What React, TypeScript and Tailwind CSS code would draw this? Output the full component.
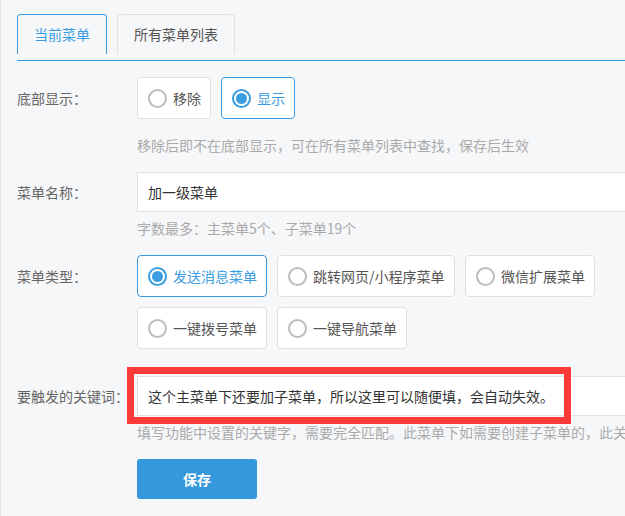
import React from "react";

type Opt = { label: string; checked?: boolean; w: string };

const Radio = ({ checked }: { checked?: boolean }) =>
  checked ? (
    <span className="w-[19px] h-[19px] rounded-full border-2 border-[#3a9de0] flex items-center justify-center shrink-0">
      <span className="w-[11px] h-[11px] rounded-full bg-[#3a9de0]"></span>
    </span>
  ) : (
    <span className="w-[19px] h-[19px] rounded-full border-2 border-[#bdbdbd] bg-white shrink-0"></span>
  );

const RadioBox = ({ label, checked, w }: Opt) => (
  <div
    className={`${w} h-[42px] flex items-center gap-[6px] pl-[10px] rounded-[4px] border bg-white text-[14px] ${
      checked ? "border-[#3a9de0] text-[#3a9de0]" : "border-[#e1e1e1] text-[#555]"
    }`}
  >
    <Radio checked={checked} />
    <span className="leading-none">{label}</span>
  </div>
);

const Label = ({ children }: { children: React.ReactNode }) => (
  <div className="w-[120px] shrink-0 text-[14px] text-[#666] leading-none">{children}</div>
);

const Hint = ({ children }: { children: React.ReactNode }) => (
  <div className="ml-[120px] h-[20px] leading-[20px] text-[14px] text-[#aaa] whitespace-nowrap">{children}</div>
);

export default function App() {
  return (
    <div
      className="w-[625px] h-[516px] overflow-hidden bg-[#f6f7f9] border-l border-[#e3e3e3]"
      style={{ fontFamily: '"Noto Sans CJK SC", "Noto Sans", sans-serif' }}
    >
      <div className="pl-[16px] pt-[14px]">
        {/* Tabs */}
        <div className="flex gap-[10px] h-[40px]">
          <div className="w-[90px] flex items-center justify-center border border-b-0 border-[#3a9de0] rounded-t-[4px] text-[14px] text-[#3a9de0]">
            当前菜单
          </div>
          <div className="w-[118px] flex items-center justify-center border border-b-0 border-[#e1e1e1] rounded-t-[4px] text-[14px] text-[#555]">
            所有菜单列表
          </div>
        </div>
        <div className="mt-[6px] h-px bg-[#3a9de0]"></div>

        {/* 底部显示 */}
        <div className="mt-[16px] flex items-center">
          <Label>底部显示：</Label>
          <div className="flex gap-[10px]">
            <RadioBox label="移除" w="w-[74px]" />
            <RadioBox label="显示" checked w="w-[74px]" />
          </div>
        </div>
        <div className="mt-[16px]">
          <Hint>移除后即不在底部显示，可在所有菜单列表中查找，保存后生效</Hint>
        </div>

        {/* 菜单名称 */}
        <div className="mt-[17px] flex items-center">
          <Label>菜单名称：</Label>
          <div className="w-[560px] h-[40px] shrink-0 bg-white border border-[#e1e1e1] flex items-center pl-[10px] text-[14px] text-[#333]">
            加一级菜单
          </div>
        </div>
        <div className="mt-[6px]">
          <Hint>字数最多：主菜单5个、子菜单19个</Hint>
        </div>

        {/* 菜单类型 */}
        <div className="mt-[17px] flex">
          <div className="pt-[14px]">
            <Label>菜单类型：</Label>
          </div>
          <div className="flex flex-col gap-[10px]">
            <div className="flex gap-[10px]">
              <RadioBox label="发送消息菜单" checked w="w-[130px]" />
              <RadioBox label="跳转网页/小程序菜单" w="w-[178px]" />
              <RadioBox label="微信扩展菜单" w="w-[130px]" />
            </div>
            <div className="flex gap-[10px]">
              <RadioBox label="一键拨号菜单" w="w-[130px]" />
              <RadioBox label="一键导航菜单" w="w-[130px]" />
            </div>
          </div>
        </div>

        {/* 关键词 */}
        <div className="mt-[27px] flex items-center">
          <Label>要触发的关键词：</Label>
          <div className="relative">
            <div className="w-[560px] h-[40px] bg-white border border-[#e1e1e1] flex items-center pl-[10px] text-[14px] text-[#333] whitespace-nowrap">
              这个主菜单下还要加子菜单，所以这里可以随便填，会自动失效。
            </div>
            <div className="absolute -top-[9px] -left-[10px] w-[444px] h-[57px] border-[7px] border-[#fd3a3a]"></div>
          </div>
        </div>
        <div className="mt-[6px]">
          <Hint>填写功能中设置的关键字，需要完全匹配。此菜单下如需要创建子菜单的，此关</Hint>
        </div>

        {/* 保存 */}
        <div className="mt-[17px] ml-[120px]">
          <button className="w-[120px] h-[40px] rounded-[3px] bg-[#3598dc] text-white text-[14px] font-bold">
            保存
          </button>
        </div>
      </div>
    </div>
  );
}
